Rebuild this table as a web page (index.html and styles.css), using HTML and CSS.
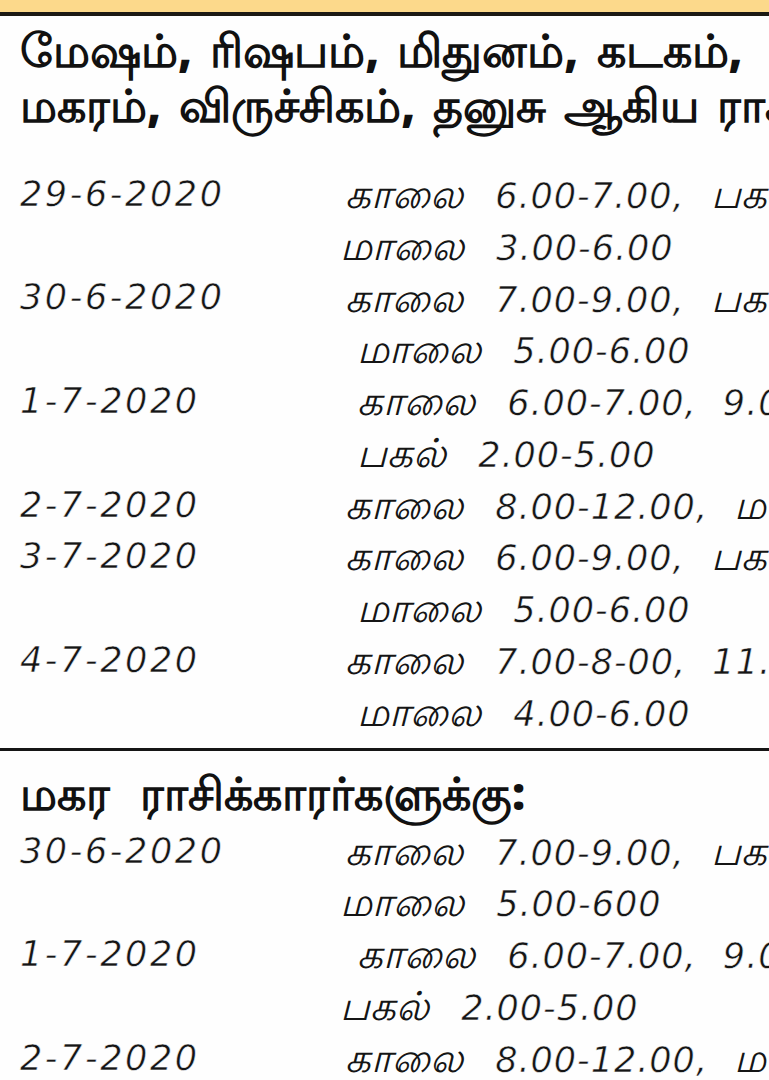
FILE: index.html
```html
<!DOCTYPE html>
<html lang="ta">
<head>
<meta charset="utf-8">
<title>ராசி நேரம்</title>
<link rel="stylesheet" href="styles.css">
</head>
<body>
<div class="page">
  <div class="band"></div>
  <div class="rule-top"></div>
  <h2 class="head">
    <span class="hl">மேஷம், ரிஷபம், மிதுனம், கடகம்,</span>
    <span class="hl">மகரம், விருச்சிகம், தனுசு ஆகிய ராசிக்காரர்களுக்கு:</span>
  </h2>
  <div class="list">
    <div class="row"><span class="date">29-6-2020</span><span class="time t1"><span class="ta">காலை</span> 6.00-7.00, <span class="ta">பகல்</span> 12.00-1.00,</span></div>
    <div class="row"><span class="date"></span><span class="time t0"><span class="ta">மாலை</span> 3.00-6.00</span></div>
    <div class="row"><span class="date">30-6-2020</span><span class="time t1"><span class="ta">காலை</span> 7.00-9.00, <span class="ta">பகல்</span> 1.00-2.00,</span></div>
    <div class="row"><span class="date"></span><span class="time t2"><span class="ta">மாலை</span> 5.00-6.00</span></div>
    <div class="row"><span class="date">1-7-2020</span><span class="time t2"><span class="ta">காலை</span> 6.00-7.00, 9.00-10.00,</span></div>
    <div class="row"><span class="date"></span><span class="time t2"><span class="ta">பகல்</span> 2.00-5.00</span></div>
    <div class="row"><span class="date">2-7-2020</span><span class="time t1"><span class="ta">காலை</span> 8.00-12.00, <span class="ta">மாலை</span> 4.00-6.00</span></div>
    <div class="row"><span class="date">3-7-2020</span><span class="time t1"><span class="ta">காலை</span> 6.00-9.00, <span class="ta">பகல்</span> 1.00-2.00,</span></div>
    <div class="row"><span class="date"></span><span class="time t2"><span class="ta">மாலை</span> 5.00-6.00</span></div>
    <div class="row"><span class="date">4-7-2020</span><span class="time t1"><span class="ta">காலை</span> 7.00-8-00, 11.00-12.00,</span></div>
    <div class="row"><span class="date"></span><span class="time t2"><span class="ta">மாலை</span> 4.00-6.00</span></div>
  </div>
  <div class="rule-mid"></div>
  <h3 class="sub">மகர ராசிக்காரர்களுக்கு:</h3>
  <div class="list">
    <div class="row"><span class="date">30-6-2020</span><span class="time t1"><span class="ta">காலை</span> 7.00-9.00, <span class="ta">பகல்</span> 1.00-2.00,</span></div>
    <div class="row"><span class="date"></span><span class="time t0"><span class="ta">மாலை</span> 5.00-600</span></div>
    <div class="row"><span class="date">1-7-2020</span><span class="time t2"><span class="ta">காலை</span> 6.00-7.00, 9.00-10.00,</span></div>
    <div class="row"><span class="date"></span><span class="time t0"><span class="ta">பகல்</span> 2.00-5.00</span></div>
    <div class="row"><span class="date">2-7-2020</span><span class="time t1"><span class="ta">காலை</span> 8.00-12.00, <span class="ta">மாலை</span> 4.00-6.00</span></div>
  </div>
</div>
</body>
</html>
```
FILE: styles.css
```css
html, body {
  margin: 0;
  padding: 0;
  background: #ffffff;
  overflow: hidden;
}
.page {
  width: 769px;
  height: 1080px;
  overflow: hidden;
  background: #fefefe;
  color: #1a1a1a;
}
.band {
  height: 12px;
  background: #fcd98b;
}
.rule-top {
  height: 4px;
  background: #1c1a14;
}
.head {
  margin: 0;
  padding: 6px 0 0 20px;
  font-family: "Noto Sans", "Liberation Sans", sans-serif;
  font-weight: 900;
  font-size: 46px;
  line-height: 55px;
  word-spacing: 6px;
  white-space: nowrap;
  color: #111;
}
.hl {
  display: block;
}
.head + .list {
  padding-top: 36px;
}
.row {
  display: flex;
  height: 51.8px;
  align-items: center;
  white-space: nowrap;
  font-family: "DejaVu Sans", "Noto Sans", sans-serif;
  font-style: italic;
  font-size: 35px;
  letter-spacing: 1px;
  word-spacing: 14px;
  color: #151515;
  -webkit-text-stroke: 0.5px #fefefe;
}
.ta {
  font-family: "Noto Sans", sans-serif;
  font-weight: 300;
  font-size: 40px;
  letter-spacing: 0;
  -webkit-text-stroke: 0;
  margin-right: 6px;
}
.date {
  width: 320px;
  padding-left: 20px;
  flex: none;
  letter-spacing: 2.6px;
}
.time {
  flex: none;
}
.t0 { padding-left: 0; }
.t1 { padding-left: 5px; }
.t2 { padding-left: 17px; }
.rule-mid {
  margin-top: 10px;
  height: 3px;
  background: #151515;
}
.sub {
  margin: 0;
  padding: 14px 0 0 20px;
  font-family: "Noto Sans", "Liberation Sans", sans-serif;
  font-weight: 900;
  font-size: 46px;
  line-height: 54px;
  word-spacing: 18px;
  color: #111;
}
.sub + .list {
  padding-top: 6px;
}
```
